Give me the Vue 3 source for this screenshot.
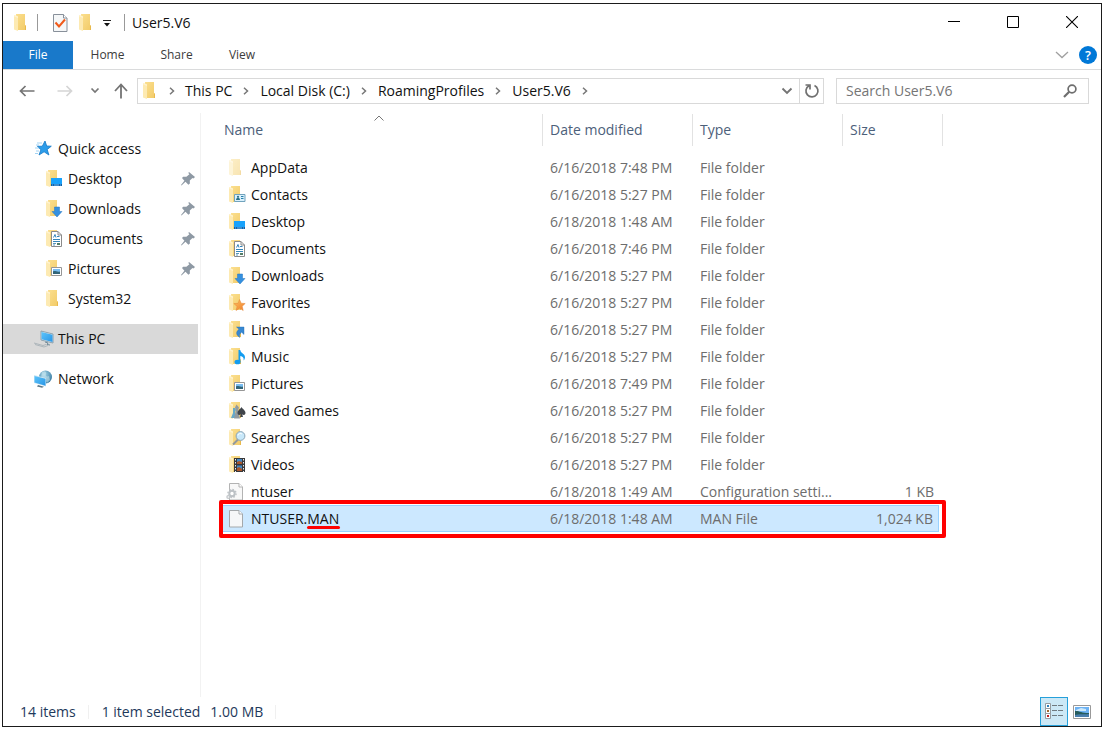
<script setup>
import { ref } from 'vue'

const search = ref('')
const tabs = ['Home', 'Share', 'View']
const crumbs = ['This PC', 'Local Disk (C:)', 'RoamingProfiles', 'User5.V6']
const quick = [
  { name: 'Desktop', icon: 'desktop', pinned: true },
  { name: 'Downloads', icon: 'downloads', pinned: true },
  { name: 'Documents', icon: 'documents', pinned: true },
  { name: 'Pictures', icon: 'pictures', pinned: true },
  { name: 'System32', icon: 'folder', pinned: false },
]
const folder = (name, icon, date) => ({ name, icon, date, type: 'File folder', size: '' })
const files = [
  folder('AppData', 'hidden', '6/16/2018 7:48 PM'),
  folder('Contacts', 'contacts', '6/16/2018 5:27 PM'),
  folder('Desktop', 'desktop', '6/18/2018 1:48 AM'),
  folder('Documents', 'documents', '6/16/2018 7:46 PM'),
  folder('Downloads', 'downloads', '6/16/2018 5:27 PM'),
  folder('Favorites', 'favorites', '6/16/2018 5:27 PM'),
  folder('Links', 'links', '6/16/2018 5:27 PM'),
  folder('Music', 'music', '6/16/2018 5:27 PM'),
  folder('Pictures', 'pictures', '6/16/2018 7:49 PM'),
  folder('Saved Games', 'games', '6/16/2018 5:27 PM'),
  folder('Searches', 'searches', '6/16/2018 5:27 PM'),
  folder('Videos', 'videos', '6/16/2018 5:27 PM'),
  { name: 'ntuser', icon: 'config', date: '6/18/2018 1:49 AM', type: 'Configuration setti...', size: '1 KB' },
  { name: 'NTUSER.', marked: 'MAN', icon: 'file', date: '6/18/2018 1:48 AM', type: 'MAN File', size: '1,024 KB', selected: true },
]
</script>

<template>
  <div class="screen">
    <svg class="defs" aria-hidden="true">
      <defs>
        <linearGradient id="gFolder" x1="0" y1="0" x2="1" y2="1">
          <stop offset="0" stop-color="#fbdf8f" /><stop offset="1" stop-color="#f2cb68" />
        </linearGradient>
        <linearGradient id="gScreen" x1="0" y1="0" x2="1" y2="1">
          <stop offset="0" stop-color="#5cc4fb" /><stop offset="1" stop-color="#2a96e6" />
        </linearGradient>
        <linearGradient id="gStar" x1="0" y1="0" x2="1" y2="1">
          <stop offset="0" stop-color="#ffc45e" /><stop offset="1" stop-color="#ee7a2b" />
        </linearGradient>
        <radialGradient id="gGlobe" cx=".4" cy=".3" r=".8">
          <stop offset="0" stop-color="#a5d6ea" /><stop offset="1" stop-color="#2a6f98" />
        </radialGradient>
      </defs>
      <symbol id="i-folder" viewBox="0 0 18 18">
        <path d="M2 0h9v11l1 1v4H3z" fill="url(#gFolder)" />
        <path d="M11 11l1 1v4h-1z" fill="#e9b94c" />
        <path d="M0 1l4 1.5V17L0 15.5z" fill="#fdeab2" />
        <path d="M0 1l4 1.5V4L0 2.200z" fill="#fff3cf" />
      </symbol>
      <symbol id="i-hidden" viewBox="0 0 18 18"><g opacity=".5"><use href="#i-folder" width="18" height="18" /></g></symbol>
      <symbol id="i-desktop" viewBox="0 0 18 18">
        <use href="#i-folder" width="18" height="18" />
        <path d="M5 8h11v8H5z" fill="#0f62ab" /><path d="M5 8h11v6H5z" fill="#19a2fb" />
        <path d="M6 15h1M8 15h5M14 15h1" stroke="#8cd0ff" stroke-width=".8" />
      </symbol>
      <symbol id="i-downloads" viewBox="0 0 18 18">
        <use href="#i-folder" width="18" height="18" />
        <path d="M8.500 7h5v4.500H16L11 17l-5-5.500h2.500z" fill="#3590df" stroke="#2377c2" stroke-width=".5" />
      </symbol>
      <symbol id="i-documents" viewBox="0 0 18 18">
        <use href="#i-folder" width="18" height="18" />
        <path d="M5.500 1.500h6.500l3.500 3.500v11.500h-10z" fill="#fff" stroke="#8a8a8a" />
        <path d="M12 1.500v3.500h3.500" fill="none" stroke="#8a8a8a" />
        <path d="M7.500 7.500l1.500-3 1 3M11 6.500h2.500M7 9.500h7M7 11.500h7" fill="none" stroke="#3585b9" />
        <path d="M7 13.500h3M7 15h2" stroke="#5b98bd" /><path d="M11 13h3v2h-3z" fill="#537d67" />
      </symbol>
      <symbol id="i-pictures" viewBox="0 0 18 18">
        <use href="#i-folder" width="18" height="18" />
        <path d="M5.500 7.500h10v8h-10z" fill="#fff" stroke="#969696" />
        <path d="M7 9h7v5H7z" fill="#78bdf2" /><path d="M7 11.500c2-1.500 4 1 7 0V14H7z" fill="#326579" />
      </symbol>
      <symbol id="i-contacts" viewBox="0 0 18 18">
        <use href="#i-folder" width="18" height="18" />
        <path d="M5.500 8.500h10.500v7H5.500z" fill="#d9f0fc" stroke="#71a3bd" />
        <circle cx="9" cy="10.800" r="1.100" fill="#2a7188" /><path d="M7 14c0-3 4-3 4 0z" fill="#2a7188" />
        <path d="M12 10.500h2.500M12 12.500h2.500" stroke="#287fa9" />
      </symbol>
      <symbol id="i-favorites" viewBox="0 0 18 18">
        <use href="#i-folder" width="18" height="18" />
        <path d="M10.500 5.500l1.700 3.700 4 .3-3 2.800 1 4.200-3.500-2.300-3.700 2.300 1.100-4.100L4.800 9.600l4.300-.3z" fill="url(#gStar)" stroke="#e48738" stroke-width=".5" />
      </symbol>
      <symbol id="i-links" viewBox="0 0 18 18">
        <use href="#i-folder" width="18" height="18" />
        <path d="M7.500 6H15v7.500l-2.400-2.300c-2 1.500-2.500 3-1.800 5.300C7 14 6.500 11 10 8.300z" fill="#3788d2" stroke="#2069b1" stroke-width=".4" />
      </symbol>
      <symbol id="i-music" viewBox="0 0 18 18">
        <use href="#i-folder" width="18" height="18" />
        <path d="M9.500 2h1.800c0 3 5 3.500 4.700 7.500-.2 1.500-.8 2.500-1.500 3 .8-2.500-.7-4.300-3.200-4.600V14H9.500z" fill="#129cf0" />
        <ellipse cx="8.500" cy="14" rx="3" ry="2.300" fill="#129cf0" />
      </symbol>
      <symbol id="i-games" viewBox="0 0 18 18">
        <use href="#i-folder" width="18" height="18" />
        <path d="M4 6h2l1 2-1 2 2 6H2l2-5z" fill="#67a8c8" /><path d="M7.500 2.500l2.500 3-1 3 2 8H5l2-8-1-3z" fill="#929a9f" />
        <path d="M12.500 5c1 2 4 3.500 4 6 0 2-2 2.500-3.300 1.300L14 15h-3l.8-2.700C10.500 13.500 8.500 13 8.500 11c0-2.500 3-4 4-6z" fill="#40454b" />
      </symbol>
      <symbol id="i-searches" viewBox="0 0 18 18">
        <use href="#i-folder" width="18" height="18" />
        <path d="M9 10.500l-5 5" stroke="#92999e" stroke-width="2" />
        <circle cx="11.500" cy="7" r="4.400" fill="#c8e8fa" stroke="#8ba5b6" />
        <path d="M9 6.500c.5-2 2.500-2.500 4-1.500" fill="none" stroke="#fff" />
      </symbol>
      <symbol id="i-videos" viewBox="0 0 18 18">
        <use href="#i-folder" width="18" height="18" />
        <path d="M5 2h11v14H5z" fill="#38383a" /><path d="M8 3h5v5H8z" fill="#4389c4" /><path d="M8 9.500h5v5.500H8z" fill="#4389c4" />
        <path d="M8 6l2-1 3 1v2H8zM8 12l2-1 3 2v2H8z" fill="#a9562c" />
        <path d="M6.500 3v13M14.500 3v13" stroke="#eee" stroke-dasharray="1.500 1.500" />
      </symbol>
      <symbol id="i-file" viewBox="0 0 18 18">
        <path d="M.5.5h9.500l3.500 3.500v13H.5z" fill="#f6f7f8" stroke="#a4a8ab" /><path d="M10 .5v3.500h3.500" fill="#fff" stroke="#a4a8ab" />
      </symbol>
      <symbol id="i-config" viewBox="0 0 21 18">
        <path d="M3.500.5h9.500l3.500 3.500v13h-13z" fill="#f8f8f8" stroke="#b3b3b3" /><path d="M13 .5v3.500h3.500" fill="#fff" stroke="#b3b3b3" />
        <circle cx="6" cy="10.500" r="2.700" fill="#fff" stroke="#bcc1c5" stroke-width="2" />
        <circle cx="6" cy="10.500" r="4.100" fill="none" stroke="#bcc1c5" stroke-width="1.300" stroke-dasharray="1.600 1.600" />
        <circle cx="2.300" cy="14" r="1.400" fill="#fff" stroke="#c3c7ca" stroke-width="1.300" />
      </symbol>
      <symbol id="i-pin" viewBox="0 0 14 14">
        <path d="M8 0l6 5-1.500 1.500-1-.4-2.700 2.400.1 3-1.500 1.200-2.900-2.900L.5 13.500 0 13l3.400-4.300L1 6l1.200-1.300 3.200.1L8.400 2.300 7.300 1z" fill="#8e99a4" />
      </symbol>
      <symbol id="i-quick" viewBox="0 0 18 18">
        <path d="M11 1l1.700 5 4.600.2-4.100 3.300 1.700 5.500-4.800-3.200L5 15l1.900-5.300-3.500-3.400 4.900-.1z" fill="#2c9dea" stroke="#1479c6" stroke-width=".8" />
        <path d="M3 3h5M2 5h3M1 8h4M2 11h3M1 13.500h3" stroke="#8cc8f0" stroke-width=".8" />
      </symbol>
      <symbol id="i-pc" viewBox="0 0 20 18">
        <path d="M7 1l12 3v9L7 10z" fill="#dfe7ea" stroke="#7893a3" stroke-width=".8" /><path d="M7.500 2l11 2.700v7.300L7.500 9.300z" fill="url(#gScreen)" />
        <path d="M11 12l3 1-1 1.500 3 .5" fill="none" stroke="#718b99" /><path d="M0 13l9 2.500 3-1M1 14.500l9 2.500 4-1.500" fill="none" stroke="#a1acb3" stroke-width=".8" />
      </symbol>
      <symbol id="i-network" viewBox="0 0 20 18">
        <circle cx="11.500" cy="7" r="6.500" fill="url(#gGlobe)" /><path d="M8 2c3-2 5 0 4 2s1 3 3 2l1 4-3 3-2-3-4-2z" fill="#d6eef4" opacity=".5" />
        <path d="M0 5l12 3v8.500L0 13z" fill="#cfe8f5" /><path d="M.5 6l11 2.700v7L.5 12.500z" fill="url(#gScreen)" /><path d="M4 15l6 1.800-2 1-5-1.300z" fill="#5d7785" />
      </symbol>
    </svg>

    <main class="window">
      <header class="titlebar">
        <svg class="icon"><use href="#i-folder" /></svg>
        <span class="rule"></span>
        <button class="tool check" aria-label="Properties">
          <svg width="15" height="18" viewBox="0 0 15 18"><path d="M.5.5h10l3.500 3.500v13.500H.5z" fill="#f5f7f8" stroke="#88909a" /><path d="M10.500.5v3.500h3.500" fill="#fff" stroke="#88909a" /><path d="M2.500 8.500l3.500 4 6-7" fill="none" stroke="#f05a1a" stroke-width="2" /></svg>
        </button>
        <button class="tool new" aria-label="New folder"><svg class="icon"><use href="#i-folder" /></svg></button>
        <button class="tool more" aria-label="Customize toolbar"><svg width="8" height="7" viewBox="0 0 8 7"><path d="M0 .5h8" stroke="#222" /><path d="M1 3h6L4 6.500z" fill="#111" /></svg></button>
        <span class="rule"></span>
        <h1>User5.V6</h1>
        <div class="controls">
          <button aria-label="Minimize"><svg width="12" height="12"><path d="M0 5.500h12" stroke="#000" /></svg></button>
          <button aria-label="Maximize"><svg width="12" height="12"><path d="M.5.5h11v11H.5z" fill="none" stroke="#000" /></svg></button>
          <button aria-label="Close"><svg width="12" height="12"><path d="M0 0l12 12M12 0L0 12" stroke="#000" stroke-width="1.100" /></svg></button>
        </div>
      </header>

      <nav class="ribbon">
        <button class="filetab">File</button>
        <button v-for="t in tabs" :key="t" class="tab" :class="t.toLowerCase()">{{ t }}</button>
        <button class="expand" aria-label="Expand the ribbon"><svg width="14" height="8"><path d="M1 1l6 5.500L13 1" fill="none" stroke="#a0a0a0" stroke-width="1.300" /></svg></button>
        <button class="help" aria-label="Help"><span>?</span></button>
      </nav>

      <div class="addressrow">
        <div class="nav">
          <button aria-label="Back"><svg width="16" height="12"><path d="M15.500 6H1.500M6.500 1L1.500 6l5 5" fill="none" stroke="#747474" stroke-width="1.700" /></svg></button>
          <button aria-label="Forward"><svg width="16" height="12"><path d="M.5 6h14M9.500 1l5 5-5 5" fill="none" stroke="#d5d5d5" stroke-width="1.700" /></svg></button>
          <button aria-label="Recent locations"><svg width="10" height="7"><path d="M1.500 1.500L5 5l3.500-3.500" fill="none" stroke="#777" stroke-width="1.700" /></svg></button>
          <button aria-label="Up"><svg width="14" height="16"><path d="M7 15.500V1.500M1 8l6-6.500L13 8" fill="none" stroke="#747474" stroke-width="1.800" /></svg></button>
        </div>
        <div class="address">
          <svg class="icon"><use href="#i-folder" /></svg>
          <span class="chev lead"><svg width="6" height="8"><path d="M1 .8L4.500 4 1 7.200" fill="none" stroke="#777" stroke-width="1.500" /></svg></span>
          <template v-for="c in crumbs" :key="c">
            <button class="crumb">{{ c }}</button>
            <span class="chev"><svg width="6" height="8"><path d="M1 .8L4.500 4 1 7.200" fill="none" stroke="#777" stroke-width="1.500" /></svg></span>
          </template>
          <button class="history" aria-label="Previous locations"><svg width="12" height="8"><path d="M1.500 1.500L6 6l4.500-4.500" fill="none" stroke="#747474" stroke-width="1.900" /></svg></button>
          <button class="refresh" aria-label="Refresh"><svg width="16" height="16"><path d="M10.500 2.500a6 6 0 1 1-5.500.2M1.500 2h4.500v4.500" fill="none" stroke="#707070" stroke-width="1.700" /></svg></button>
        </div>
        <label class="search">
          <input v-model="search" type="text" placeholder="Search User5.V6" aria-label="Search User5.V6">
          <svg width="14" height="14"><circle cx="9" cy="5" r="3.900" fill="none" stroke="#6e6e6e" stroke-width="1.700" /><path d="M6.200 7.800L1 13" stroke="#6e6e6e" stroke-width="2.200" /></svg>
        </label>
      </div>

      <div class="body">
        <aside class="side">
          <a class="node" href="#"><svg class="wide"><use href="#i-quick" width="18" height="18" /></svg>Quick access</a>
          <a v-for="q in quick" :key="q.name" class="node sub" href="#">
            <svg class="icon"><use :href="'#i-' + q.icon" /></svg>{{ q.name }}
            <svg v-if="q.pinned" class="pin"><use href="#i-pin" /></svg>
          </a>
          <a class="node root current" href="#"><svg class="wide"><use href="#i-pc" /></svg>This PC</a>
          <a class="node root" href="#"><svg class="wide"><use href="#i-network" /></svg>Network</a>
        </aside>

        <section class="pane">
          <table>
            <colgroup><col class="cname"><col class="cmid"><col class="cmid"><col class="csize"><col class="cend"></colgroup>
            <thead>
              <tr>
                <th class="first"><button>Name</button><svg class="sort" width="10" height="6"><path d="M.5 5.500L5 1l4.500 4.500" fill="none" stroke="#777" /></svg></th>
                <th><button>Date modified</button></th>
                <th><button>Type</button></th>
                <th colspan="2" class="last"><button>Size</button></th>
              </tr>
            </thead>
            <tbody>
              <tr v-for="f in files" :key="f.name" :class="{ selected: f.selected }">
                <td class="name">
                  <div><svg class="icon" :class="{ config: f.icon === 'config' }"><use :href="'#i-' + f.icon" /></svg><span>{{ f.name }}<span v-if="f.marked" class="marked">{{ f.marked }}</span></span></div>
                  <span v-if="f.selected" class="highlight"></span>
                </td>
                <td>{{ f.date }}</td>
                <td>{{ f.type }}</td>
                <td class="size">{{ f.size }}</td>
                <td class="end"></td>
              </tr>
            </tbody>
          </table>
        </section>
      </div>

      <footer class="status">
        <span class="count">14 items</span>
        <span class="sel">1 item selected</span>
        <span class="total">1.00 MB</span>
        <div class="views">
          <button class="details" aria-label="Details view">
            <svg width="18" height="17"><path d="M.5.5h5v5h-5zM.5 5.500h5v5h-5zM.5 10.500h5v5h-5z" fill="#fff" stroke="#959ba0" /><path d="M2 3h2" stroke="#2b7fbd" stroke-width="2" /><path d="M2 8h2" stroke="#a3672f" stroke-width="2" /><path d="M2 13h2" stroke="#c22020" stroke-width="2" /><path d="M7 2.500h5M13 2.500h5M7 7.500h5M13 7.500h5M7 12.500h5M13 12.500h5" stroke="#707a80" /></svg>
          </button>
          <button class="thumbs" aria-label="Thumbnail view">
            <svg width="18" height="14"><path d="M.5.5h17v13H.5z" fill="#fff" stroke="#999" /><path d="M2 2h14v10H2z" fill="#6db2f3" /><path d="M3 5l5-2 5 1v2H3z" fill="#cde9fb" /><path d="M2 6c4-.5 6 2 14 2v2H2z" fill="#265c5c" /><path d="M2 10c5-1.500 8 0 14-1v3H2z" fill="#497ead" /></svg>
          </button>
        </div>
      </footer>
    </main>
  </div>
</template>

<style>
body { margin: 0; background: #fff; }
</style>

<style scoped>
* { box-sizing: border-box; }
.screen { min-height: 100vh; padding: 3px 4px 3px 2px; display: flex; background: #fff; color: #111; font: 14px/20px "Open Sans", "Noto Sans", sans-serif; }
.defs { position: absolute; width: 0; height: 0; }
button { border: 0; padding: 0; margin: 0; background: none; font: inherit; color: inherit; display: flex; align-items: center; justify-content: center; }
svg { flex: none; display: block; }
.icon { width: 18px; height: 18px; }
.window { flex: 1; min-width: 0; display: flex; flex-direction: column; border: 1px solid #1b1b1b; }

.titlebar { height: 37px; display: flex; align-items: center; padding-left: 11px; }
.rule { width: 1px; height: 17px; background: #999; }
.titlebar > .icon { margin-right: 5px; }
.check { margin-left: 15px; }
.new { margin-left: 11px; }
.more { margin: 2px 13px 0 6px; }
h1 { margin: 0 0 0 7px; font-size: 14px; font-weight: 400; }
.controls { display: flex; margin-left: auto; height: 100%; padding-bottom: 2px; }
.controls button { width: 59px; }

.ribbon { height: 29px; display: flex; border-bottom: 1px solid #dadbdc; font-size: 12px; color: #3c3c3c; }
.filetab { width: 70px; height: 28px; background: #1979ca; color: #fff; }
.tab { height: 28px; width: 69px; }
.tab.view { width: 62px; }
.expand { margin-left: auto; width: 26px; height: 28px; }
.help { width: 26px; height: 28px; }
.help span { width: 18px; height: 18px; border-radius: 50%; background: #0078d7; color: #fff; font-weight: 600; line-height: 18px; font-size: 13px; }

.addressrow { height: 43px; display: flex; align-items: center; padding: 0 12px 2px 0; }
.nav { display: grid; grid-template-columns: 48px 28px 32px 20px; margin-right: 6px; height: 26px; }
.address { flex: 1; min-width: 0; height: 26px; border: 1px solid #d9d9d9; display: flex; align-items: center; padding-left: 5px; }
.address .icon { margin-right: -3px; }
.chev { width: 28px; display: flex; justify-content: center; flex: none; }
.chev.lead { width: 27px; }
.crumb { white-space: nowrap; }
.history { margin-left: auto; width: 24px; height: 24px; }
.refresh { width: 24px; height: 24px; border-left: 1px solid #d9d9d9; }
.search { width: 253px; height: 26px; margin-left: 12px; border: 1px solid #d9d9d9; display: flex; align-items: center; padding: 0 11px 0 9px; }
.search input { flex: 1; min-width: 0; border: 0; outline: 0; padding: 0; background: none; font: inherit; color: #6d6d6d; }
.search input::placeholder { color: #757575; opacity: 1; }

.body { flex: 1; display: flex; min-height: 0; }
.side { width: 198px; padding-top: 21px; border-right: 1px solid #f2f2f2; }
.node { display: flex; align-items: center; height: 30px; padding-left: 31px; margin-right: 2px; color: #111; text-decoration: none; }
.node .wide { width: 20px; height: 18px; margin-right: 4px; }
.sub { padding-left: 43px; }
.sub .icon { margin-right: 4px; }
.pin { width: 14px; height: 14px; margin-left: auto; margin-right: 3px; }
.root { margin-top: 10px; }
.current { background: #d9d9d9; }

.pane { flex: 1; min-width: 0; padding: 1px 0 0 20px; }
table { table-layout: fixed; width: 722px; border-collapse: separate; border-spacing: 0; }
.cname { width: 322px; }
.cmid { width: 150px; }
.csize { width: 96px; }
.cend { width: 4px; }
th { height: 32px; padding: 0 0 0 7px; border-right: 1px solid #e2e2e2; font-weight: 400; color: #4c607a; position: relative; }
th.first { padding-left: 3px; }
.sort { position: absolute; left: 153px; top: 1px; }
tbody::before { content: ""; display: table-row; height: 8px; }
tbody tr { position: relative; }
td { height: 27px; padding: 0 0 0 7px; color: #6d6d6d; white-space: nowrap; border-top: 1px solid transparent; border-bottom: 1px solid transparent; }
td.name { padding-left: 8px; color: #111; }
td.name div { display: flex; align-items: center; gap: 4px; }
.name .config { width: 21px; margin-left: -3px; }
td.size { text-align: right; padding-right: 5px; }
td.end { padding: 0; }
.selected td:not(.end) { background: #cce8ff; border-color: #99d1ff; }
.selected td.size { border-right: 1px solid #99d1ff; }
.marked { position: relative; }
.marked::after { content: ""; position: absolute; left: 0; right: -1px; bottom: -1px; height: 3px; border-radius: 2px; background: #f00; }
.highlight { position: absolute; inset: -5px -3px -6px -2px; border: 4px solid #f00; border-radius: 2px; }

.status { height: 29px; display: flex; align-items: center; padding-left: 17px; color: #1e395b; }
.count { padding-right: 12px; border-right: 1px solid #f0f0f0; line-height: 14px; }
.sel { padding-left: 13px; }
.total { margin-left: 10px; padding-right: 12px; border-right: 1px solid #f0f0f0; line-height: 14px; }
.views { margin-left: auto; display: flex; align-items: center; margin-right: 5px; }
.details { width: 28px; height: 29px; background: #cce8f6; border: 1px solid #26a0da; }
.thumbs { width: 28px; height: 29px; }
</style>
